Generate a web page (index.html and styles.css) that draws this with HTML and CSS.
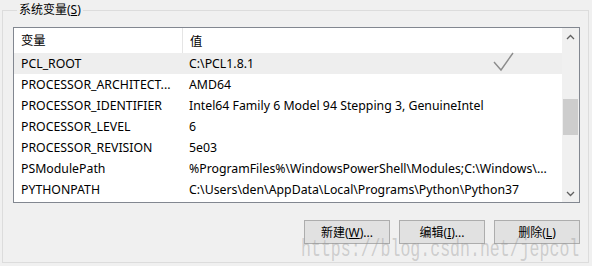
FILE: index.html
```html
<!DOCTYPE html>
<html>
<head>
    <title>环境变量</title>
    <meta charset="utf-8">
    <link rel="stylesheet" href="styles.css">
</head>
<body>
    <fieldset class="group">
        <legend>系统变量(<u>S</u>)</legend>

        <div class="listbox">
            <div class="list">
                <div class="header">
                    <div class="col name">变量</div>
                    <div class="col value">值</div>
                </div>
                <div class="row hover">
                    <div class="col name">PCL_ROOT</div>
                    <div class="col value">C:\PCL1.8.1</div>
                    <svg class="tick" width="22" height="20" viewBox="0 0 22 20">
                        <path d="M1 10 L8 18 L20 1" fill="none" stroke="#8c8c8c" stroke-width="1.4"/>
                    </svg>
                </div>
                <div class="row">
                    <div class="col name">PROCESSOR_ARCHITECT...</div>
                    <div class="col value">AMD64</div>
                </div>
                <div class="row">
                    <div class="col name">PROCESSOR_IDENTIFIER</div>
                    <div class="col value">Intel64 Family 6 Model 94 Stepping 3, GenuineIntel</div>
                </div>
                <div class="row">
                    <div class="col name">PROCESSOR_LEVEL</div>
                    <div class="col value">6</div>
                </div>
                <div class="row">
                    <div class="col name">PROCESSOR_REVISION</div>
                    <div class="col value">5e03</div>
                </div>
                <div class="row">
                    <div class="col name">PSModulePath</div>
                    <div class="col value">%ProgramFiles%\WindowsPowerShell\Modules;C:\Windows\...</div>
                </div>
                <div class="row">
                    <div class="col name">PYTHONPATH</div>
                    <div class="col value">C:\Users\den\AppData\Local\Programs\Python\Python37</div>
                </div>
            </div>
            <div class="scrollbar">
                <div class="arrow">
                    <svg width="9" height="6" viewBox="0 0 9 6"><path d="M1 5 L4.5 1.5 L8 5" fill="none" stroke="#606060" stroke-width="1.3"/></svg>
                </div>
                <div class="track"><div class="thumb"></div></div>
                <div class="arrow">
                    <svg width="9" height="6" viewBox="0 0 9 6"><path d="M1 1 L4.5 4.5 L8 1" fill="none" stroke="#606060" stroke-width="1.3"/></svg>
                </div>
            </div>
        </div>

        <div class="buttons">
            <button>新建(<u>W</u>)...</button>
            <button>编辑(<u>I</u>)...</button>
            <button>删除(<u>L</u>)</button>
        </div>

        <div class="watermark">https://blog.csdn.net/jepcol</div>
    </fieldset>
</body>
</html>
```
FILE: styles.css
```css
body {
    margin: 0;
    width: 592px;
    height: 266px;
    overflow: hidden;
    background-color: #f0f0f0;
    font-family: "Noto Sans", "Noto Sans CJK SC", sans-serif;
    font-size: 12px;
    color: #000;
}
.group {
    position: relative;
    box-sizing: border-box;
    width: 587px;
    height: 261px;
    margin: 2px 3px 0 2px;
    padding: 9px 8px 0 10px;
    border: 1px solid #dcdcdc;
    min-width: 0;
}
.group legend {
    margin-left: 4px;
    padding: 0 2px;
    line-height: 16px;
}
.listbox {
    display: flex;
    box-sizing: border-box;
    width: 567px;
    height: 176px;
    border: 1px solid #828790;
    background-color: #fff;
}
.list {
    flex: 1;
    overflow: hidden;
    font-size: 12.3px;
}
.header,
.row {
    display: flex;
    align-items: center;
}
.header {
    height: 25px;
}
.row {
    position: relative;
    height: 21px;
}
.row.hover {
    background-color: #eeeeee;
}
.col {
    padding-left: 7px;
    white-space: nowrap;
    overflow: hidden;
}
.col.name {
    width: 161px;
}
.header .col.name {
    height: 25px;
    line-height: 25px;
    border-right: 1px solid #e5e5e5;
}
.col.value {
    flex: 1;
}
.tick {
    position: absolute;
    left: 479px;
    top: -1px;
}
.scrollbar {
    width: 17px;
    display: flex;
    flex-direction: column;
    background-color: #f0f0f0;
}
.arrow {
    height: 17px;
    display: flex;
    align-items: center;
    justify-content: center;
}
.track {
    flex: 1;
    padding-top: 54px;
}
.thumb {
    height: 36px;
    margin: 0 1px;
    background-color: #cdcdcd;
}
.buttons {
    display: flex;
    justify-content: flex-end;
    gap: 9px;
    margin-top: 17px;
    width: 567px;
}
button {
    width: 86px;
    height: 24px;
    padding: 0;
    border: 1px solid #adadad;
    background-color: #e1e1e1;
    font-family: inherit;
    font-size: 12px;
    color: #000;
}
.watermark {
    position: absolute;
    left: 298px;
    top: 219px;
    font-family: "Liberation Mono", monospace;
    font-size: 23px;
    line-height: 26px;
    transform: scaleX(0.72);
    transform-origin: left top;
    white-space: nowrap;
    color: rgba(150, 150, 150, 0.4);
    pointer-events: none;
}
```
